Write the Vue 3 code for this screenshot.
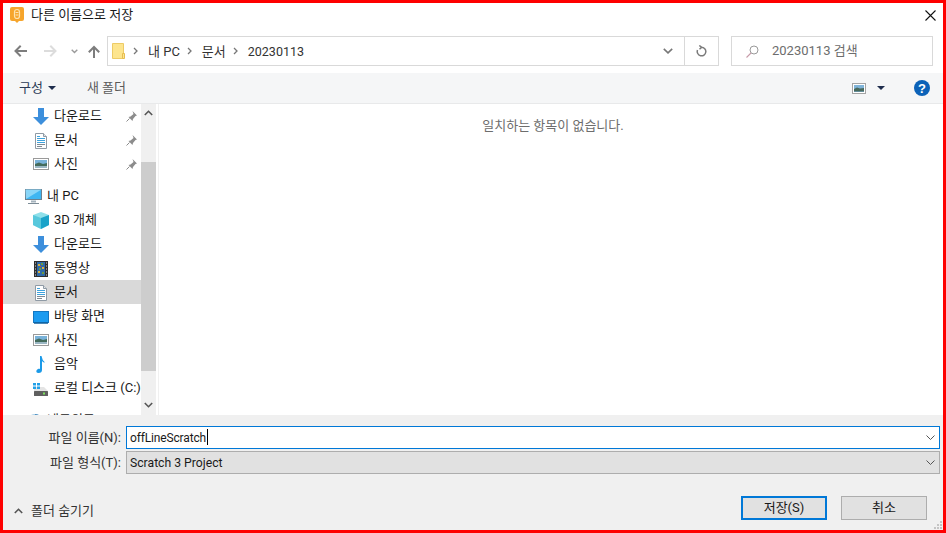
<script setup>
const pin = true
const topItems = [
  { icon: 'down', label: '다운로드', pin },
  { icon: 'doc', label: '문서', pin },
  { icon: 'pic', label: '사진', pin },
]
const pcItems = [
  { icon: 'cube', label: '3D 개체' },
  { icon: 'down', label: '다운로드' },
  { icon: 'film', label: '동영상' },
  { icon: 'doc', label: '문서', active: true },
  { icon: 'desk', label: '바탕 화면' },
  { icon: 'pic', label: '사진' },
  { icon: 'music', label: '음악' },
  { icon: 'disk', label: '로컬 디스크 (C:)' },
]
</script>

<template>
  <div class="frame">
    <header class="title">
      <svg class="app" width="14" height="16" viewBox="0 0 14 16">
        <path d="M0 2q0-2 2-2h10q2 0 2 2v10q0 2-2 2H9l-2 2-2-2H2q-2 0-2-2z" fill="#f6a52c"/>
        <rect x="4.500" y="2.500" width="5" height="9" rx="2.500" fill="none" stroke="#fde3b0" stroke-width="1.200"/>
        <path d="M5.500 5.500h3M5.500 8h3" stroke="#fde3b0"/>
      </svg>
      <span class="title-text">다른 이름으로 저장</span>
      <svg class="close" width="11" height="11" viewBox="0 0 11 11"><path d="M.5.500l10 10M10.500.5l-10 10" stroke="#111" stroke-width="1.100"/></svg>
    </header>

    <nav class="nav">
      <svg width="13" height="12" viewBox="0 0 13 12"><path d="M13 6H2M6.700.8L1.500 6l5.200 5.200" fill="none" stroke="#7d7d7d" stroke-width="2"/></svg>
      <svg class="fwd" width="13" height="12" viewBox="0 0 13 12"><path d="M0 6h11M6.300.8L11.500 6l-5.200 5.200" fill="none" stroke="#dcdcdc" stroke-width="2"/></svg>
      <svg class="hist" width="7" height="5" viewBox="0 0 7 5"><path d="M.7.800L3.500 3.500 6.300.8" fill="none" stroke="#9a9a9a" stroke-width="1.400"/></svg>
      <svg class="up" width="12" height="13" viewBox="0 0 12 13"><path d="M6 13V2M.8 7.200L6 2l5.200 5.200" fill="none" stroke="#7d7d7d" stroke-width="2"/></svg>
      <div class="path">
        <svg class="folder" width="13" height="16" viewBox="0 0 13 16"><path d="M.5.500h11v15H.5z" fill="#fde58e" stroke="#edcb66"/><path d="M10.500 10.500h2v5h-2z" fill="#fde58e" stroke="#e6bd50"/></svg>
        <svg class="crumb" width="5" height="8" viewBox="0 0 5 8"><path d="M1 1l3 3-3 3" fill="none" stroke="#777" stroke-width="1.300"/></svg>
        <span class="seg">내 PC</span>
        <svg class="crumb" width="5" height="8" viewBox="0 0 5 8"><path d="M1 1l3 3-3 3" fill="none" stroke="#777" stroke-width="1.300"/></svg>
        <span class="seg">문서</span>
        <svg class="crumb" width="5" height="8" viewBox="0 0 5 8"><path d="M1 1l3 3-3 3" fill="none" stroke="#777" stroke-width="1.300"/></svg>
        <span class="seg latin">20230113</span>
        <div class="path-end">
          <span class="path-btn">
            <svg width="10" height="6" viewBox="0 0 10 6"><path d="M.8.800L5 4.800 9.200.8" fill="none" stroke="#777" stroke-width="1.600"/></svg>
          </span>
          <span class="path-btn">
            <svg width="11" height="12" viewBox="0 0 11 12"><path d="M5.500 2.200a4.300 4.300 0 1 1-4 2.800M3.300.500l2.400 1.800-2.200 2" fill="none" stroke="#7b7b7b" stroke-width="1.500"/></svg>
          </span>
        </div>
      </div>
      <div class="search">
        <svg width="13" height="13" viewBox="0 0 13 13"><circle cx="8" cy="5" r="4" fill="none" stroke="#9a9a9a"/><path d="M5 8L.5 12.500" stroke="#c79aa8" stroke-width="1.100"/></svg>
        <span>20230113 검색</span>
      </div>
    </nav>

    <div class="toolbar">
      <span class="tool organize">구성</span>
      <i class="caret"></i>
      <span class="tool newfolder">새 폴더</span>
      <svg class="view" width="14" height="11" viewBox="0 0 14 11">
        <rect x=".5" y=".5" width="13" height="10" fill="#fff" stroke="#a4a4a4"/>
        <rect x="2" y="2" width="10" height="7" fill="#7fb3d8"/>
        <path d="M2 6l3-1.500 3 1 4-.5v3.500H2z" fill="#48695c"/>
      </svg>
      <i class="caret view-caret"></i>
      <svg class="help" width="16" height="16" viewBox="0 0 16 16">
        <circle cx="8" cy="8" r="8" fill="#0c62b8"/>
        <text x="8" y="12.500" text-anchor="middle" class="help-q">?</text>
      </svg>
    </div>

    <main class="body">
      <aside class="side">
        <div class="tree">
          <template v-for="(group, g) in [topItems, pcItems]" :key="g">
            <div v-if="g === 1" class="row pc">
              <svg class="ic" width="17" height="15" viewBox="0 0 17 15">
                <rect x=".5" y=".5" width="16" height="10" fill="#3fb6f2" stroke="#6a8190"/>
                <path d="M.5.500h16L1 10z" fill="#8ad6f8"/>
                <path d="M6 11.500h5v2H6z" fill="#a5b3bd"/>
                <path d="M3 14.500h11" stroke="#7c8c97"/>
              </svg>
              <span>내 PC</span>
            </div>
            <div v-for="item in group" :key="item.label + g" class="row" :class="{ active: item.active }">
              <svg class="ic" width="16" height="17" viewBox="0 0 16 17">
                <template v-if="item.icon === 'down'"><path d="M5 0h6v9h5l-8 8-8-8h5z" fill="#3d8fdc"/></template>
                <template v-else-if="item.icon === 'doc'">
                  <path d="M2.500 1.500h8l3 3v12h-11z" fill="#fff" stroke="#8f9aa5"/>
                  <path d="M10.500 1.500v3h3" fill="#dfe4e8" stroke="#8f9aa5"/>
                  <path d="M4 4.500h3M4 6.500h8M4 8.500h8M4 10.500h8" stroke="#3fa3dd"/>
                  <path d="M4 12.500h8M4 14.500h5" stroke="#7f8a94"/>
                </template>
                <template v-else-if="item.icon === 'pic'">
                  <rect x=".5" y="2.500" width="15" height="11" fill="#fff" stroke="#9a9a9a"/>
                  <rect x="2" y="4" width="12" height="8" fill="#79b2d9"/>
                  <path d="M2 8l4-1.500 4 1.500 4-1v5H2z" fill="#446b5c"/>
                  <path d="M2 10h12v2H2z" fill="#9bb7c4"/>
                </template>
                <template v-else-if="item.icon === 'cube'">
                  <path d="M8 0l8 3v10l-8 4-8-4V3z" fill="#8fe0ea"/>
                  <path d="M8 6l8-3v10l-8 4z" fill="#1aa3c9"/>
                  <path d="M0 3l8 3v11l-8-4z" fill="#58c8dc"/>
                </template>
                <template v-else-if="item.icon === 'film'">
                  <rect x="1" y="1" width="14" height="16" fill="#2f2f2f"/>
                  <rect x="4" y="2" width="8" height="14" fill="#2f6aa8"/>
                  <path d="M5 4h2v2H5zM9 7h2v2H9zM5 11h2v2H5z" fill="#d8b040"/>
                  <path d="M8 3h2v2H8zM6 8h2v2H6zM9 12h2v2H9z" fill="#6d9a3f"/>
                  <path d="M7 6h1v1H7z" fill="#c9472f"/>
                  <path d="M2 3h1M2 6h1M2 9h1M2 12h1M2 15h1M13 3h1M13 6h1M13 9h1M13 12h1M13 15h1" stroke="#ddd"/>
                </template>
                <template v-else-if="item.icon === 'desk'">
                  <rect x=".5" y="3.500" width="15" height="11" fill="#1b9bf0" stroke="#1377c2"/>
                  <path d="M1 15h14" stroke="#0f5f9d" stroke-width="1.500"/>
                </template>
                <template v-else-if="item.icon === 'music'">
                  <path d="M7 0h1.500q.5 4 3.500 6.500-2 0-3-1.500V14q0 3-3.500 3C3.500 17 3 15.500 3.500 14.500 4.200 13 6 12.500 7 13z" fill="#1b9ae8"/>
                </template>
                <template v-else>
                  <path d="M1 7h10l4 4H1z" fill="#e4e4e4"/>
                  <path d="M0 3h3v2.500H0zM4 3h3v2.500H4zM0 6.500h3V9H0zM4 6.500h3V9H4z" fill="#22a0e8"/>
                  <rect x="1" y="11" width="14" height="5" rx=".5" fill="#5f5f5f"/>
                  <rect x="10" y="12.500" width="2" height="2" fill="#7de35f"/>
                </template>
              </svg>
              <span>{{ item.label }}</span>
              <svg v-if="item.pin" class="pin" width="11" height="11" viewBox="0 0 11 11">
                <path d="M6.500 0l4.500 4.500-1.500.5-2.500 3-.5 2L2.500 6l2-.5 3-2.500z" fill="#8c8c8c"/>
                <path d="M3.500 7.500L.5 10.500" stroke="#8c8c8c"/>
              </svg>
            </div>
          </template>
          <div class="row pc net">
            <svg class="ic" width="17" height="15" viewBox="0 0 17 15"><circle cx="10" cy="9" r="8" fill="#a9d0e8"/><path d="M10 1a8 8 0 0 1 0 16z" fill="#4f8fc0"/></svg>
            <span>네트워크</span>
          </div>
        </div>
        <div class="scroll">
          <svg class="arrow" width="9" height="6" viewBox="0 0 9 6"><path d="M.8 5l3.700-3.700L8.200 5" fill="none" stroke="#555" stroke-width="1.600"/></svg>
          <div class="track"><div class="thumb"></div></div>
          <svg class="arrow" width="9" height="6" viewBox="0 0 9 6"><path d="M.8 1l3.700 3.700L8.200 1" fill="none" stroke="#555" stroke-width="1.600"/></svg>
        </div>
      </aside>
      <section class="list">일치하는 항목이 없습니다.</section>
    </main>

    <footer class="foot">
      <div class="field">
        <label>파일 이름(N):</label>
        <div class="combo focused">
          <span class="latin name">offLineScratch<i class="cursor"></i></span>
          <svg width="9" height="5" viewBox="0 0 9 5"><path d="M.5.500l4 4 4-4" fill="none" stroke="#555"/></svg>
        </div>
      </div>
      <div class="field second">
        <label>파일 형식(T):</label>
        <div class="combo gray">
          <span class="latin type">Scratch 3 Project</span>
          <svg width="9" height="5" viewBox="0 0 9 5"><path d="M.5.500l4 4 4-4" fill="none" stroke="#555"/></svg>
        </div>
      </div>
      <div class="actions">
        <span class="hide">
          <svg width="9" height="6" viewBox="0 0 9 6"><path d="M.8 5l3.700-3.700L8.200 5" fill="none" stroke="#555" stroke-width="1.600"/></svg>
          폴더 숨기기
        </span>
        <button class="btn primary">저장(S)</button>
        <button class="btn">취소</button>
      </div>
      <svg class="grip" width="9" height="9" viewBox="0 0 9 9">
        <path d="M6 0h2v2H6zM3 3h2v2H3zM6 3h2v2H6zM0 6h2v2H0zM3 6h2v2H3zM6 6h2v2H6z" fill="#c4c4c4"/>
      </svg>
    </footer>
  </div>
</template>

<style>
html, body { margin: 0; padding: 0; }
</style>

<style scoped>
.frame {
  width: 946px;
  height: 533px;
  box-sizing: border-box;
  border: 3px solid #fe0000;
  background: #fff;
  display: flex;
  flex-direction: column;
  overflow: hidden;
  font-family: Roboto, "Noto Sans CJK KR", sans-serif;
  font-size: 13px;
  line-height: 16px;
  color: #1a1a1a;
}
.latin { font-size: 12.5px; }
.name { font-size: 12px; letter-spacing: -0.15px; }
.type { font-size: 12.2px; }
.title {
  height: 24px;
  flex: none;
  display: flex;
  align-items: center;
  padding: 0 7px 0 7px;
}
.title-text { margin-left: 7px; flex: 1; }
.nav {
  height: 46px;
  flex: none;
  display: flex;
  align-items: center;
  padding: 2px 10px 0 11px;
  box-sizing: border-box;
}
.fwd { margin-left: 17px; }
.hist { margin-left: 14px; }
.up { margin-left: 10px; }
.path {
  margin-left: 7px;
  width: 612px;
  height: 30px;
  box-sizing: border-box;
  border: 1px solid #d9d9d9;
  display: flex;
  align-items: center;
  padding-left: 4px;
  color: #333;
}
.folder { margin-right: 8px; }
.crumb { margin: 0 10px 0 0; }
.seg { margin-right: 7px; padding-top: 2px; }
.path-end { margin-left: auto; display: flex; height: 100%; }
.path-btn {
  width: 33px;
  display: flex;
  align-items: center;
  justify-content: center;
  border-left: 1px solid #d9d9d9;
}
.path-btn:first-child { width: 32px; border-left: 0; }
.search {
  margin-left: 12px;
  width: 202px;
  height: 30px;
  box-sizing: border-box;
  border: 1px solid #d9d9d9;
  display: flex;
  align-items: center;
  gap: 13px;
  padding-left: 14px;
  color: #6d6d6d;
}
.toolbar {
  height: 31px;
  flex: none;
  box-sizing: border-box;
  background: #f5f6f7;
  border-bottom: 1px solid #e8e9ea;
  display: flex;
  align-items: center;
  padding: 0 13px 0 16px;
  color: #2b3a55;
}
.caret {
  width: 0;
  height: 0;
  border-left: 4px solid transparent;
  border-right: 4px solid transparent;
  border-top: 4px solid #1e2d4d;
  margin-left: 5px;
}
.newfolder { margin-left: 31px; color: #5a5a5a; }
.view { margin-left: auto; }
.view-caret { margin-left: 11px; }
.help { margin-left: 29px; }
.help-q { font: bold 13px "Liberation Sans", sans-serif; fill: #fff; }
.body { flex: 1; min-height: 0; display: flex; }
.side {
  width: 153px;
  flex: none;
  display: flex;
  overflow: hidden;
}
.tree { width: 138px; flex: none; overflow: hidden; }
.row {
  height: 24px;
  display: flex;
  align-items: center;
  padding-left: 30px;
  position: relative;
  white-space: nowrap;
  color: #1a1a1a;
}
.row .ic { margin-right: 5px; flex: none; }
.row.active { background: #d9d9d9; }
.row.pc { margin-top: 8px; padding-left: 22px; }
.row.pc .ic { margin-right: 5px; overflow: visible; }
.pin { position: absolute; right: 4px; top: 7px; }
.scroll {
  width: 15px;
  flex: none;
  background: #f0f0f0;
  display: flex;
  flex-direction: column;
  align-items: center;
}
.arrow { flex: none; margin: 6px 0 7px; }
.track { flex: 1; width: 100%; padding-top: 39px; padding-bottom: 25px; box-sizing: border-box; display: flex; }
.thumb { flex: 1; background: #cdcdcd; }
.list {
  flex: 1;
  margin-left: 2px;
  border-left: 1px solid #f0f0f0;
  text-align: center;
  color: #6d6d6d;
  padding-top: 14px;
  padding-left: 4px;
  line-height: 16px;
}
.foot {
  height: 115px;
  flex: none;
  box-sizing: border-box;
  background: #f0f0f0;
  padding: 11px 3px 0 0;
  display: flex;
  flex-direction: column;
  position: relative;
}
.field { display: flex; align-items: center; height: 23px; }
.field.second { margin-top: 2px; }
.field label { width: 118px; text-align: right; margin-right: 5px; color: #333; flex: none; }
.combo {
  flex: 1;
  height: 23px;
  box-sizing: border-box;
  display: flex;
  align-items: center;
  justify-content: space-between;
  padding: 0 4px 0 3px;
  background: #fff;
}
.combo.focused { border: 1px solid #0078d7; }
.combo.gray { background: #e1e1e1; border: 1px solid #adadad; }
.cursor { display: inline-block; width: 1px; height: 16px; background: #000; vertical-align: -3px; margin-left: 1px; }
.actions {
  display: flex;
  align-items: center;
  margin-top: 22px;
  padding-left: 11px;
  padding-right: 13px;
}
.hide { display: flex; align-items: center; gap: 8px; margin-right: auto; color: #333; margin-top: 5px; }
.btn {
  width: 86px;
  height: 24px;
  box-sizing: border-box;
  background: #e1e1e1;
  border: 1px solid #adadad;
  font: inherit;
  color: #1a1a1a;
  margin-left: 14px;
  padding: 0;
}
.btn.primary { border: 2px solid #0078d7; }
.grip { position: absolute; right: 0; bottom: 0; }
</style>
